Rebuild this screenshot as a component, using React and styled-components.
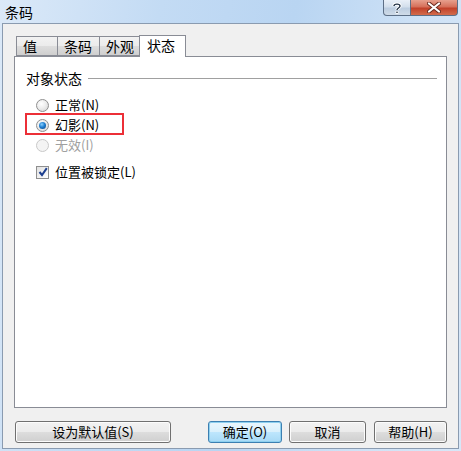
import React, { useState } from 'react';
import styled, { createGlobalStyle } from 'styled-components';

const GlobalStyle = createGlobalStyle`
  html, body { margin: 0; padding: 0; }
  body {
    width: 461px;
    height: 451px;
    overflow: hidden;
    font-family: "Noto Sans CJK SC", "Liberation Sans", sans-serif;
    font-size: 12px;
    color: #000;
  }
`;

const Window = styled.div`
  width: 461px;
  height: 451px;
  box-sizing: border-box;
  display: flex;
  flex-direction: column;
  background: linear-gradient(100deg, #dbe9f8 0%, #c3dbf4 30%, #b9d5f2 55%, #cfe2f6 80%, #d7e7f8 100%);
  padding: 0 2px 2px 2px;
`;

const TitleBar = styled.div`
  height: 23px;
  display: flex;
  align-items: flex-start;
  justify-content: space-between;
  flex-shrink: 0;
`;

const Title = styled.div`
  font-size: 14px;
  line-height: 14px;
  padding: 5px 0 0 3px;
  color: #000;
`;

const Caption = styled.div`
  display: flex;
  margin-right: 1px;
`;

const CaptionButton = styled.div`
  height: 16px;
  width: ${p => p.$w}px;
  box-sizing: border-box;
  border: 1px solid #5d6f86;
  border-top: none;
  display: flex;
  align-items: center;
  justify-content: center;
  background: ${p => p.$close
    ? 'linear-gradient(#e7a08e 0%, #d6705a 45%, #c2412a 55%, #d36c4c 100%)'
    : 'linear-gradient(#e9f0f8 0%, #d3dfec 45%, #bccde0 55%, #cfdbe8 100%)'};
  border-radius: ${p => p.$close ? '0 0 4px 0' : '0 0 0 4px'};
  border-left: ${p => p.$close ? 'none' : '1px solid #5d6f86'};
`;

const Client = styled.div`
  flex: 1;
  background: #f0f0f0;
  border: 1px solid #8a9bb0;
  display: flex;
  flex-direction: column;
  padding: 11px 11px 0 11px;
`;

const TabRow = styled.div`
  display: flex;
  align-items: flex-end;
  padding-left: 2px;
  height: 21px;
  position: relative;
  z-index: 2;
`;

const Tab = styled.div`
  box-sizing: border-box;
  width: ${p => p.$w}px;
  height: ${p => (p.$active ? 22 : 20)}px;
  margin-bottom: ${p => (p.$active ? -1 : 0)}px;
  margin-left: ${p => (p.$active ? -1 : 0)}px;
  border: 1px solid #898c95;
  border-bottom: ${p => (p.$active ? 'none' : '1px solid #898c95')};
  border-left: ${p => (p.$first || p.$active ? '1px solid #898c95' : 'none')};
  background: ${p => (p.$active ? '#fff' : 'linear-gradient(#f2f2f2 0%, #ebebeb 50%, #dddddd 51%, #cfcfcf 100%)')};
  padding: ${p => (p.$active ? '1px 0 0 7px' : '1px 0 0 6px')};
  font-size: 14px;
  line-height: 17px;
  cursor: default;
`;

const Panel = styled.div`
  height: 352px;
  box-sizing: border-box;
  background: #fff;
  border: 1px solid #898c95;
  padding: 13px 9px 0 11px;
  display: flex;
  flex-direction: column;
`;

const Group = styled.div`
  display: flex;
  flex-direction: column;
`;

const Legend = styled.div`
  display: flex;
  align-items: center;
  gap: 6px;
  font-size: 14px;
  line-height: 16px;
  &::after {
    content: '';
    flex: 1;
    height: 1px;
    background: #a0a0a0;
  }
`;

const Options = styled.div`
  display: flex;
  flex-direction: column;
  padding: 9px 0 0 10px;
`;

const Option = styled.label`
  display: flex;
  align-items: center;
  gap: 6px;
  height: 20px;
  line-height: 20px;
  font-size: 13px;
  color: ${p => (p.$disabled ? '#a0a0a0' : '#000')};
  position: relative;
  width: max-content;
`;

const Highlight = styled.div`
  position: absolute;
  left: -11px;
  top: -2px;
  width: 99px;
  height: 22px;
  box-sizing: border-box;
  border: 2px solid #ec2f37;
  pointer-events: none;
`;

const Radio = styled.span`
  width: 13px;
  height: 13px;
  box-sizing: border-box;
  border-radius: 50%;
  border: 1px solid ${p => (p.$disabled ? '#c9c9c9' : '#8f8f8f')};
  background: ${p => (p.$disabled ? '#f4f4f4' : 'radial-gradient(circle at 40% 35%, #ffffff 0%, #ededed 45%, #cfcfcf 100%)')};
  display: flex;
  align-items: center;
  justify-content: center;
  &::after {
    content: '';
    display: ${p => (p.$checked ? 'block' : 'none')};
    width: 7px;
    height: 7px;
    border-radius: 50%;
    background: radial-gradient(circle at 40% 35%, #8ad0ff 0%, #1f7fd0 45%, #0b3f82 100%);
  }
`;

const Box = styled.span`
  width: 13px;
  height: 13px;
  box-sizing: border-box;
  border: 1px solid #8f8f8f;
  background: linear-gradient(135deg, #e1e1e1, #ffffff);
  display: flex;
  align-items: center;
  justify-content: center;
`;

const Spacer = styled.div`
  height: ${p => p.$h}px;
`;

const ButtonRow = styled.div`
  display: flex;
  align-items: center;
  margin-top: 13px;
  padding-left: 1px;
`;

const Button = styled.button`
  width: ${p => p.$w}px;
  height: 22px;
  margin-left: ${p => p.$ml || 0}px;
  box-sizing: border-box;
  border: 1px solid ${p => (p.$default ? '#3c7fb1' : '#707070')};
  border-radius: 3px;
  background: ${p => (p.$default
    ? 'linear-gradient(#eaf6fd 0%, #d9f0fc 50%, #bee6fd 51%, #a7d9f5 100%)'
    : 'linear-gradient(#f2f2f2 0%, #ebebeb 50%, #dddddd 51%, #cfcfcf 100%)')};
  box-shadow: ${p => (p.$default ? 'inset 0 0 0 1px #8ed0ef' : 'inset 0 0 0 1px #fcfcfc')};
  font-family: "Noto Sans CJK SC", "Liberation Sans", sans-serif;
  font-size: 13px;
  line-height: 18px;
  padding: 0;
  color: #000;
`;

export default function App() {
  const [tab, setTab] = useState(3);
  const [state, setState] = useState('phantom');
  const [locked, setLocked] = useState(true);
  const tabs = [
    { label: '值', w: 42 },
    { label: '条码', w: 42 },
    { label: '外观', w: 40 },
    { label: '状态', w: 47 },
  ];

  return (
    <>
      <GlobalStyle />
      <Window>
        <TitleBar>
          <Title>条码</Title>
          <Caption>
            <CaptionButton $w={28}>
              <svg width="10" height="12" viewBox="0 0 10 12">
                <path d="M2 4 C2 1.5 8 1.5 8 4 C8 6 5 6 5 8" fill="none" stroke="#fff" strokeWidth="3.2" />
                <path d="M2 4 C2 1.5 8 1.5 8 4 C8 6 5 6 5 8" fill="none" stroke="#243447" strokeWidth="1.4" />
                <rect x="3.6" y="9" width="2.8" height="2.8" fill="#fff" />
                <rect x="4.3" y="9.6" width="1.4" height="1.4" fill="#243447" />
              </svg>
            </CaptionButton>
            <CaptionButton $w={47} $close>
              <svg width="14" height="11" viewBox="0 0 14 11">
                <path d="M2 1.5 L12 9.5 M12 1.5 L2 9.5" stroke="#6b2a1e" strokeWidth="4" strokeLinecap="round" />
                <path d="M2 1.5 L12 9.5 M12 1.5 L2 9.5" stroke="#fff" strokeWidth="2.2" strokeLinecap="round" />
              </svg>
            </CaptionButton>
          </Caption>
        </TitleBar>
        <Client>
          <TabRow>
            {tabs.map((t, i) => (
              <Tab key={t.label} $w={t.w} $first={i === 0} $active={i === tab} onClick={() => setTab(i)}>
                {t.label}
              </Tab>
            ))}
          </TabRow>
          <Panel>
            <Group>
              <Legend>对象状态</Legend>
              <Options>
                <Option onClick={() => setState('normal')}>
                  <Radio $checked={state === 'normal'} />
                  正常(N)
                </Option>
                <Option onClick={() => setState('phantom')}>
                  <Highlight />
                  <Radio $checked={state === 'phantom'} />
                  幻影(N)
                </Option>
                <Option $disabled>
                  <Radio $disabled />
                  无效(I)
                </Option>
                <Spacer $h={7} />
                <Option onClick={() => setLocked(!locked)}>
                  <Box>
                    {locked && (
                      <svg width="10" height="10" viewBox="0 0 10 10">
                        <path d="M1.5 5 L4 8 L8.8 1.2" fill="none" stroke="#1d3f8f" strokeWidth="2" />
                      </svg>
                    )}
                  </Box>
                  位置被锁定(L)
                </Option>
              </Options>
            </Group>
          </Panel>
          <ButtonRow>
            <Button $w={156}>设为默认值(S)</Button>
            <Button $w={74} $ml={37} $default>确定(O)</Button>
            <Button $w={77} $ml={7}>取消</Button>
            <Button $w={73} $ml={8}>帮助(H)</Button>
          </ButtonRow>
        </Client>
      </Window>
    </>
  );
}
